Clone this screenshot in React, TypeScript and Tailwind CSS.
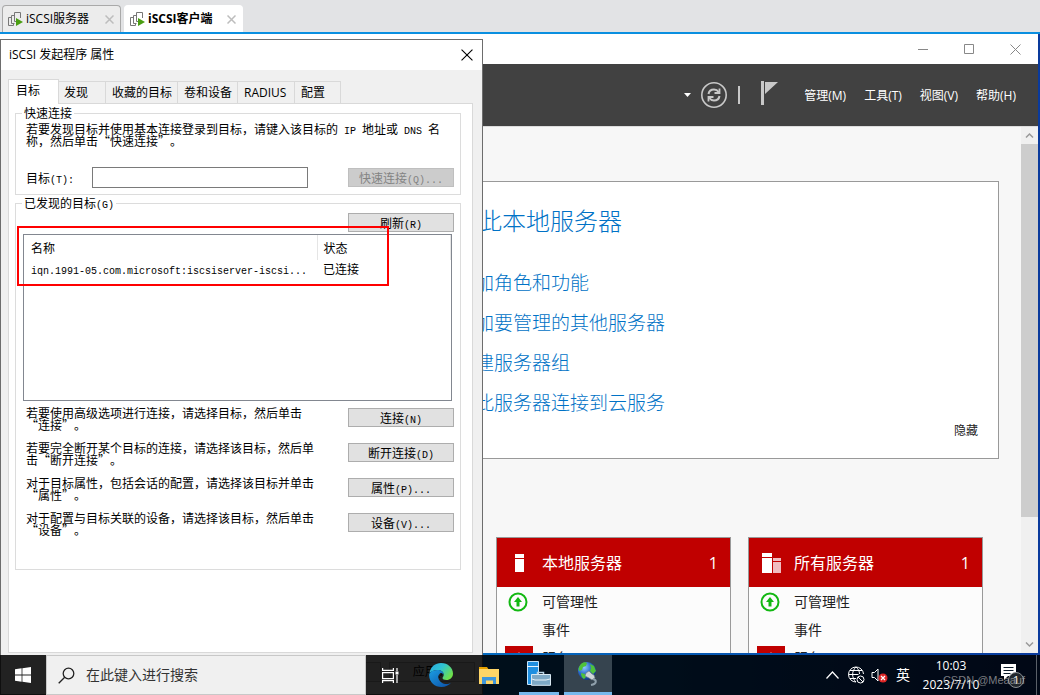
import { useState, type ReactNode } from "react";

const UI_FONT = "font-['Open_Sans','Noto_Sans_CJK_SC',sans-serif]";
const SONG_FONT = "font-['Noto_Sans_CJK_SC',sans-serif] [text-spacing-trim:space-all]";

type Hint = { lines: [string, string]; action: string; suffix: string };

const HINTS: Hint[] = [
  {
    lines: ["若要使用高级选项进行连接，请选择目标，然后单击", "“连接”。"],
    action: "连接",
    suffix: "(N)",
  },
  {
    lines: ["若要完全断开某个目标的连接，请选择该目标，然后单", "击“断开连接”。"],
    action: "断开连接",
    suffix: "(D)",
  },
  {
    lines: ["对于目标属性，包括会话的配置，请选择该目标并单击", "“属性”。"],
    action: "属性",
    suffix: "(P)...",
  },
  {
    lines: ["对于配置与目标关联的设备，请选择该目标，然后单击", "“设备”。"],
    action: "设备",
    suffix: "(V)...",
  },
];

const DIALOG_TABS = [
  { label: "发现", width: "w-[47px] pl-[5px]" },
  { label: "收藏的目标", width: "w-[72px] pl-[6px]" },
  { label: "卷和设备", width: "w-[60px] pl-[6px]" },
  { label: "RADIUS", width: "w-[57px] pl-[6px]" },
  { label: "配置", width: "w-[46px] pl-[6px]" },
];

const WELCOME_LINKS = [
  "添加角色和功能",
  "添加要管理的其他服务器",
  "创建服务器组",
  "将此服务器连接到云服务",
];

/** Half-width latin text, 6px per character */
function Mono({ children }: { children: ReactNode }) {
  return (
    <span className="whitespace-pre font-['Liberation_Mono',monospace] text-[10px] leading-[6px]">
      {children}
    </span>
  );
}

function DialogButton({
  label,
  suffix,
  disabled,
}: {
  label: string;
  suffix: string;
  disabled?: boolean;
}) {
  return (
    <button
      disabled={disabled}
      className="flex h-[19px] w-[106px] shrink-0 items-center justify-center border border-[#adadad] bg-[#e1e1e1] text-[12px] leading-3 text-black disabled:border-[#bfbfbf] disabled:bg-[#cccccc] disabled:text-[#838383]"
    >
      <span className="whitespace-nowrap">
        {label}
        <Mono>{suffix}</Mono>
      </span>
    </button>
  );
}

function CloseX({ className, size = 11 }: { className?: string; size?: number }) {
  return (
    <svg width={size} height={size} viewBox="0 0 11 11" className={className}>
      <path d="M.5.5l10 10M10.5.5l-10 10" stroke="currentColor" fill="none" />
    </svg>
  );
}

function VmIcon() {
  return (
    <svg width="15" height="15" viewBox="0 0 15 15" className="shrink-0">
      <g fill="none" stroke="#777">
        <path d="M3.500 5.500h-3v8h5v-2" />
        <path d="M6.500 3.500h-3v8h3" />
        <path d="M12.500 6V.5h-6v9h2" />
      </g>
      <path d="M8 6l7 4-7 4z" fill="#4a9e12" />
    </svg>
  );
}

function VmTab({ label, active }: { label: string; active?: boolean }) {
  return (
    <div
      className={`flex h-[27px] w-[119px] items-center rounded-t border border-b-0 pl-[5px] pr-[6px] ${
        active ? "border-white bg-white" : "border-[#a9a9a9] bg-[#ececec]"
      }`}
    >
      <VmIcon />
      <button
        className={`ml-[3px] flex-1 whitespace-nowrap text-left text-[12px] leading-4 text-black ${
          active ? "font-bold" : ""
        }`}
      >
        {label}
      </button>
      <button aria-label="关闭标签" className="text-[#bdbdbd]">
        <svg width="9" height="9" viewBox="0 0 9 9">
          <path d="M.5.5l8 8M8.500.5l-8 8" stroke="currentColor" strokeWidth="1.500" />
        </svg>
      </button>
    </div>
  );
}

function ServerTile({ title, all }: { title: string; all?: boolean }) {
  return (
    <section className="w-[235px] shrink-0 border border-[#999] bg-[#fcfcfc]">
      <header className="flex h-[49px] items-center bg-[#c00000] pr-[12px] text-white">
        <span className="flex w-[45px] justify-center">
          {all ? (
            <svg width="20" height="20" viewBox="0 0 20 20">
              <path d="M0 0h10v4H0zM0 5h10v15H0z" fill="#fff" />
              <path d="M11 5h8v3h-8zM11 9h8v11h-8z" fill="#f0bcc0" />
            </svg>
          ) : (
            <svg width="9" height="18" viewBox="0 0 9 18">
              <path d="M0 0h9v4H0zM0 5h9v13H0z" fill="#fff" />
            </svg>
          )}
        </span>
        <h3 className="flex-1 text-[16px] leading-6">{title}</h3>
        <span className="text-[16px] leading-6">1</span>
      </header>
      <ul className="pt-px text-[14px] leading-7 text-[#222]">
        <li className="flex h-7 items-center">
          <span className="mr-[3px] flex w-[42px] justify-center">
            <svg width="20" height="20" viewBox="0 0 20 20">
              <circle cx="10" cy="10" r="8.500" fill="none" stroke="#12b812" strokeWidth="2" />
              <path d="M10 5l4 5h-2.500v4.500h-3V10H6z" fill="#12b812" />
            </svg>
          </span>
          可管理性
        </li>
        <li className="flex h-7 items-center pl-[45px]">事件</li>
        <li className="flex h-7 items-center">
          <span className="mr-[1px] flex w-[44px] justify-center">
            <span className="flex h-6 w-7 items-start justify-center bg-[#c00000] pt-[6px]">
              <svg width="8" height="8" viewBox="0 0 8 8">
                <path d="M4 0l4 8H0z" fill="#fff" />
              </svg>
            </span>
          </span>
          服务
        </li>
      </ul>
    </section>
  );
}

function ServerManager() {
  return (
    <div className="absolute inset-x-0 top-0 bottom-[42px] mr-[2px] flex flex-col overflow-hidden bg-white">
      <div className="flex h-[30px] shrink-0 items-center justify-end gap-[35px] pr-[17px] text-[#888]">
        <button aria-label="最小化">
          <svg width="11" height="11" viewBox="0 0 11 11">
            <path d="M0 5.500h10" stroke="currentColor" />
          </svg>
        </button>
        <button aria-label="最大化">
          <svg width="11" height="11" viewBox="0 0 11 11">
            <path d="M.5.5h9v9h-9z" stroke="currentColor" fill="none" />
          </svg>
        </button>
        <button aria-label="关闭">
          <CloseX />
        </button>
      </div>

      <header className="flex h-[62px] shrink-0 items-center justify-end bg-[#414141] pr-[22px] text-white">
        <svg width="7" height="4" viewBox="0 0 7 4" className="mr-[9px]">
          <path d="M0 0h7L3.500 4z" fill="#fff" />
        </svg>
        <button aria-label="刷新">
          <svg width="28" height="28" viewBox="0 0 28 28" fill="none" stroke="#c8c8c8">
            <circle cx="14" cy="14" r="12.200" strokeWidth="1.600" />
            <path d="M8.500 13c.5-3 2.500-4.500 5.500-4.500 2 0 3.500.8 4.700 2.500M19.500 15c-.5 3-2.500 4.500-5.500 4.500-2 0-3.500-.8-4.700-2.500" strokeWidth="2" />
            <path d="M19.500 7.500v4.500h-5M8.500 20.500V16h5" strokeWidth="1.800" />
          </svg>
        </button>
        <span className="ml-[10px] h-[18px] w-[2px] bg-[#c8c8c8]" />
        <button aria-label="通知" className="-mt-1 ml-[21px] mr-[25px]">
          <svg width="18" height="24" viewBox="0 0 18 24">
            <path d="M0 0h3v24H0zM4 1h13L4 13z" fill="#c8c8c8" />
          </svg>
        </button>
        <nav className="flex gap-[18px] pt-px text-[12px] leading-4">
          <button>管理(M)</button>
          <button>工具(T)</button>
          <button>视图(V)</button>
          <button>帮助(H)</button>
        </nav>
      </header>

      <div className="flex min-h-0 flex-1 border-t border-[#dcdcdc] bg-[#f7f7f7]">
        <main className="min-w-0 flex-1 overflow-hidden pl-[252px] pr-[22px] pt-[54px]">
          <section className="border border-[#999] bg-white pb-[19px] pl-[177px] pr-5 pt-[23px]">
            <h1 className="text-[24px] font-light leading-8 text-[#0072c6]">配置此本地服务器</h1>
            <ul className="mt-[26px] pl-[26px] text-[19px] font-light leading-10 text-[#0072c6]">
              {WELCOME_LINKS.map((text) => (
                <li key={text}>
                  <a href="#" className="block whitespace-nowrap">
                    {text}
                  </a>
                </li>
              ))}
            </ul>
            <div className="flex justify-end text-[12px] leading-4 text-[#222]">
              <button>隐藏</button>
            </div>
          </section>
          <div className="mt-[78px] flex justify-end gap-[17px] pr-4">
            <ServerTile title="本地服务器" />
            <ServerTile title="所有服务器" all />
          </div>
        </main>

        <div className="flex w-[17px] shrink-0 flex-col items-center bg-[#f0f0f0] text-[#999]">
          <svg width="17" height="17" viewBox="0 0 17 17" fill="none" stroke="currentColor" className="shrink-0">
            <path d="M5 10.500L8.500 7l3.500 3.500" strokeWidth="1.500" />
          </svg>
          <div className="w-full grow-[373] bg-[#cdcdcd]" />
          <div className="grow-[119]" />
          <svg width="17" height="17" viewBox="0 0 17 17" fill="none" stroke="currentColor" className="shrink-0">
            <path d="M5 6.500L8.500 10 12 6.500" strokeWidth="1.500" />
          </svg>
        </div>
      </div>
    </div>
  );
}

function InitiatorDialog() {
  const [target, setTarget] = useState("");

  return (
    <div className="absolute bottom-0 left-0 top-[5px] flex w-[483px] flex-col border border-[#6d6d6d] bg-[#f0f0f0] text-[12px] text-black">
      <div className="flex h-[30px] shrink-0 items-center justify-between bg-white pl-2 pr-[9px]">
        <h2 className="leading-4">iSCSI 发起程序 属性</h2>
        <button aria-label="关闭">
          <CloseX size={12} />
        </button>
      </div>

      <div className="mx-[7px] mt-[9px] flex items-end leading-4" role="tablist">
        <button
          role="tab"
          aria-selected="true"
          className="z-10 -mb-px h-[25px] w-[51px] border border-b-0 border-[#d9d9d9] bg-white pl-[7px] pb-[2px] text-left"
        >
          目标
        </button>
        {DIALOG_TABS.map((tab) => (
          <button
            key={tab.label}
            role="tab"
            className={`h-[22px] whitespace-nowrap border-r border-t border-[#d9d9d9] text-left ${tab.width}`}
          >
            {tab.label}
          </button>
        ))}
      </div>

      <div
        className={`ml-[7px] mr-[9px] h-[550px] shrink-0 border border-[#d9d9d9] bg-white pl-[6px] pr-[11px] pt-[3px] leading-3 ${SONG_FONT}`}
      >
        <fieldset className="border border-[#dcdcdc] pb-[6px]">
          <legend className="ml-[6px] px-[2px]">快速连接</legend>
          <p className="ml-[10px] mt-1 whitespace-nowrap">
            若要发现目标并使用基本连接登录到目标，请键入该目标的<Mono> IP </Mono>地址或
            <Mono> DNS </Mono>名<br />
            称，然后单击“快速连接”。
          </p>
          <div className="ml-[10px] mr-[6px] mt-5 flex items-center">
            <label htmlFor="target" className="w-[66px]">
              目标<Mono>(T):</Mono>
            </label>
            <input
              id="target"
              value={target}
              onChange={(e) => setTarget(e.target.value)}
              className="h-[21px] w-[216px] border border-[#7a7a7a] bg-white px-1"
            />
            <div className="ml-auto">
              <DialogButton label="快速连接" suffix="(Q)..." disabled />
            </div>
          </div>
        </fieldset>

        <fieldset className="mt-[2px] border border-[#dcdcdc] pb-[33px]">
          <legend className="ml-[6px] px-[2px]">
            已发现的目标<Mono>(G)</Mono>
          </legend>
          <div className="mr-[6px] mt-1 flex justify-end">
            <DialogButton label="刷新" suffix="(R)" />
          </div>
          <div className="relative ml-[7px] mr-2 mt-[2px] h-[167px] border border-[#828790] bg-white">
            <table className="w-full table-fixed border-collapse text-left">
              <thead>
                <tr className="h-[25px]">
                  <th className="w-[293px] border-r border-[#e5e5e5] pl-[7px] font-normal">名称</th>
                  <th className="border-r border-[#e5e5e5] pl-[6px] font-normal">状态</th>
                </tr>
              </thead>
              <tbody>
                <tr className="h-[17px]">
                  <td className="whitespace-nowrap pl-[7px]">
                    <Mono>iqn.1991-05.com.microsoft:iscsiserver-iscsi...</Mono>
                  </td>
                  <td className="pl-[6px]">已连接</td>
                </tr>
              </tbody>
            </table>
            <div className="pointer-events-none absolute -left-[7px] -top-[9px] h-[60px] w-[372px] border-2 border-[#ff0000]" />
          </div>
          <div className="mt-[6px] flex flex-col gap-[11px]">
            {HINTS.map((hint) => (
              <div key={hint.action} className="ml-[10px] mr-[6px] flex items-start justify-between">
                <p className="whitespace-nowrap">
                  {hint.lines[0]}
                  <br />
                  {hint.lines[1]}
                </p>
                <div className="pt-px">
                  <DialogButton label={hint.action} suffix={hint.suffix} />
                </div>
              </div>
            ))}
          </div>
        </fieldset>
      </div>

      <div className="mr-[7px] mt-[9px] flex justify-end gap-2">
        <button className="h-[20px] w-[86px] border border-[#adadad] bg-[#e1e1e1] leading-4">取消</button>
        <button className="h-[20px] w-[86px] border border-[#adadad] bg-[#e1e1e1] leading-4">应用(A)</button>
      </div>
    </div>
  );
}

function EdgeIcon() {
  return (
    <svg width="24" height="24" viewBox="0 0 24 24">
      <defs>
        <linearGradient id="edgeTop" x1="0" y1="0" x2="1" y2="0.600">
          <stop offset="0" stopColor="#2aa7e0" />
          <stop offset="0.500" stopColor="#2fc3d2" />
          <stop offset="1" stopColor="#6fe04a" />
        </linearGradient>
        <linearGradient id="edgeBase" x1="0" y1="0" x2="1" y2="1">
          <stop offset="0" stopColor="#1b9de2" />
          <stop offset="1" stopColor="#0c4ea6" />
        </linearGradient>
      </defs>
      <path d="M.5 10C1.500 3.500 6.500 0 12 0c7 0 12 5 12 10.500 0 4-3 6.500-6.500 6.500-2.500 0-4-1-4-2 0-.8 1.200-1.200 1.200-3.200C14.700 9 12 7 8.500 7 5 7 2 8.500.5 10z" fill="url(#edgeTop)" />
      <path d="M.2 11C1.500 8.500 4.500 7 8.500 7c3.500 0 6.200 2 6.200 4.500-1-1-2.200-1.500-3.200-1.500-2 1.500-2.500 3.500-2 5.500 1 3.500 4.500 5.500 8 5.500 1.800 0 3.200-.4 4.500-1.200C20 22.500 16.500 24 12.500 24 5.500 24-.5 18.500.2 11z" fill="url(#edgeBase)" />
    </svg>
  );
}

function Taskbar() {
  return (
    <div className="absolute inset-x-0 bottom-0 flex h-10 bg-black/86 text-white">
      <button aria-label="开始" className="flex w-[46px] items-center justify-center">
        <svg width="16" height="16" viewBox="0 0 16 16" fill="#fff">
          <path d="M0 2.200L6.600 1.300v6.300H0zM7.400 1.200L16 0v7.600H7.400zM0 8.400h6.600v6.300L0 13.800zM7.400 8.400H16V16l-8.600-1.200z" />
        </svg>
      </button>
      <label className="flex w-[320px] items-center border border-[#c8c8c8] bg-[#f0f0f0] pl-[11px]">
        <svg width="17" height="17" viewBox="0 0 17 17" fill="none" stroke="#222" strokeWidth="1.300">
          <circle cx="10.500" cy="6.500" r="5.300" />
          <path d="M6.700 10.300L.7 16.300" />
        </svg>
        <input
          placeholder="在此键入进行搜索"
          aria-label="搜索"
          className="ml-[11px] min-w-0 flex-1 bg-transparent text-[14px] leading-5 text-black outline-none placeholder:text-[#333]"
        />
      </label>

      <button aria-label="任务视图" className="flex w-12 items-center justify-center">
        <svg width="17" height="17" viewBox="0 0 17 17" fill="none" stroke="#fff" strokeWidth="1.200">
          <path d="M.6 1v2.400h10.800V1M.6 5.600h10.800v6H.6zM.6 16v-2.400h10.800V16M15 1v3M15 8v8" />
          <path d="M13.500 4.500h3v3h-3z" fill="#fff" stroke="none" />
        </svg>
      </button>
      <button aria-label="Edge" className="flex w-[54px] items-center justify-center">
        <EdgeIcon />
      </button>
      <button aria-label="文件资源管理器" className="flex w-[42px] items-center justify-center">
        <svg width="22" height="19" viewBox="0 0 22 19">
          <path d="M1 1h8l2 3H1z" fill="#e5a100" />
          <path d="M1 3h20v15H1z" fill="#ffd667" />
          <path d="M4 18v-7h14v7h-3v-3.500H8V18z" fill="#3f97dc" />
        </svg>
      </button>
      <button
        aria-label="服务器管理器"
        className="ml-[9px] flex w-10 items-center justify-center border-b-3 border-[#76b9ed]"
      >
        <svg width="24" height="25" viewBox="0 0 24 25">
          <path d="M.5.5h11v23H.5z" fill="#1f8fe0" stroke="#c5e4fa" />
          <path d="M0 5.500h12" stroke="#e8f5ff" />
          <path d="M10.500 13.500v-2h6v2" fill="none" stroke="#b9d4e6" strokeWidth="1.500" />
          <path d="M4.500 13.500h19v10.800h-19z" fill="#7ea9c6" stroke="#d9e8f2" />
          <path d="M5 18l3 1h11l4-1" fill="none" stroke="#e8f2f8" />
        </svg>
      </button>
      <button
        aria-label="iSCSI 发起程序"
        className="ml-[5px] flex w-12 items-center justify-center border-b-3 border-[#76b9ed] bg-[#36444f]"
      >
        <svg width="24" height="26" viewBox="0 0 24 26">
          <defs>
            <radialGradient id="globe" cx="0.350" cy="0.300" r="0.800">
              <stop offset="0" stopColor="#8fc8ff" />
              <stop offset="0.500" stopColor="#2767c8" />
              <stop offset="1" stopColor="#0e2b74" />
            </radialGradient>
          </defs>
          <circle cx="11" cy="10" r="9" fill="url(#globe)" />
          <path d="M5 3c2-2 5-2 6-1l-1 3-3 1-1 3-3 1c-1-2 0-5 2-7zM14 3l4 2 2 5-3 3-3-3 1-3zM5 12l4 1 1 3-2 2c-2-1-3-3-3-6z" fill="#4fc23a" />
          <path d="M10 12l3-2 3 3 2 1 1 3-3 2-3-2-4-2z" fill="#cfd5d8" stroke="#697782" strokeWidth="0.600" />
          <path d="M17 18c4 1 4 5-2 6" fill="none" stroke="#8fa0ab" strokeWidth="2" />
        </svg>
      </button>

      <div className="ml-auto flex items-center">
        <svg width="13" height="8" viewBox="0 0 13 8" fill="none" stroke="#fff" strokeWidth="1.200">
          <path d="M.5 7.500l6-6.500 6 6.500" />
        </svg>
        <svg width="17" height="18" viewBox="0 0 17 18" fill="none" stroke="#fff" className="ml-[9px]">
          <path d="M8 16A7.500 7.500 0 1 1 15.500 8M8 1C3.500 5 3.500 12 8 16M8 1c2.500 2 3.500 4.500 3.500 7M.5 8.500h10M2 4.500h12M2 12.500h6" />
          <circle cx="12.500" cy="13.500" r="3.500" />
          <path d="M10 11l5 5" />
        </svg>
        <svg width="17" height="16" viewBox="0 0 17 16" className="ml-[6px]">
          <path d="M1 5.500h2.500L7 2v12l-3.500-3.500H1z" fill="none" stroke="#fff" />
          <circle cx="12" cy="11" r="4.500" fill="#dc2626" />
          <path d="M10 9l4 4M14 9l-4 4" stroke="#fff" strokeWidth="1.200" />
        </svg>
        <button className="ml-2 text-[14px] leading-5">英</button>
        <time className="ml-2 flex w-[66px] flex-col text-center text-[12px] leading-[19px]">
          <span>10:03</span>
          <span>2023/7/10</span>
        </time>
        <button aria-label="通知" className="relative ml-[15px] mr-[13px] h-[30px] w-[24px]">
          <svg width="26" height="28" viewBox="0 0 26 28">
            <path d="M2 3h15v12H9l-4 4v-4H2z" fill="#fff" />
            <path d="M4.500 6.500h10M4.500 9.500h10M4.500 12.500h7" stroke="#0b1a2a" />
            <circle cx="17" cy="19" r="7.500" fill="#20262c" stroke="#8a8f94" />
          </svg>
          <span className="absolute left-[14px] top-[12px] text-[11px] leading-4">1</span>
        </button>
        <span className="mr-[3px] h-10 w-px bg-[#5a6068]" />
      </div>
      <span className="absolute bottom-[7px] right-[15px] whitespace-nowrap font-['Liberation_Sans',sans-serif] text-[11px] leading-4 text-[#b0b0b0]/70">
        CSDN @Meaauf
      </span>
    </div>
  );
}

export default function App() {
  return (
    <div className={`flex h-screen flex-col overflow-hidden ${UI_FONT}`}>
      <div className="flex h-8 shrink-0 items-end gap-[3px] bg-[#e2e3e5] pl-[2px]">
        <VmTab label="iSCSI服务器" />
        <VmTab label="iSCSI客户端" active />
      </div>
      <div className="h-[2px] shrink-0 bg-[#0a8fe0]" />
      <div className="relative min-h-0 flex-1 bg-gradient-to-r from-[#0f96e0] to-[#0a3a9c]">
        <ServerManager />
        <InitiatorDialog />
        <Taskbar />
      </div>
    </div>
  );
}
